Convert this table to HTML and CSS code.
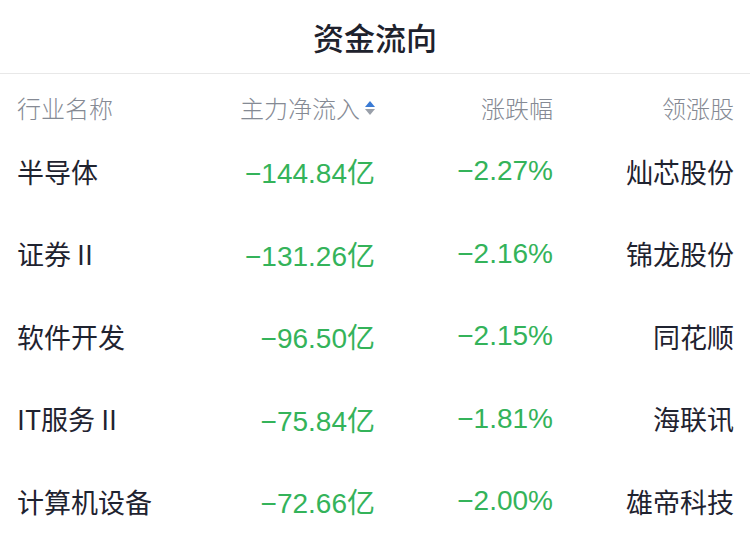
FILE: index.html
```html
<!DOCTYPE html>
<html lang="zh">
<head>
<meta charset="utf-8">
<link rel="stylesheet" href="styles.css">
</head>
<body>
<div class="panel">
  <div class="title">资金流向</div>
  <div class="table">
    <div class="row head">
      <div class="c1">行业名称</div>
      <div class="c2">主力净流入<span class="sort"><i class="up"></i><i class="down"></i></span></div>
      <div class="c3">涨跌幅</div>
      <div class="c4">领涨股</div>
    </div>
    <div class="row">
      <div class="c1">半导体</div>
      <div class="c2 num">−144.84亿</div>
      <div class="c3 num">−2.27%</div>
      <div class="c4">灿芯股份</div>
    </div>
    <div class="row">
      <div class="c1">证券 II</div>
      <div class="c2 num">−131.26亿</div>
      <div class="c3 num">−2.16%</div>
      <div class="c4">锦龙股份</div>
    </div>
    <div class="row">
      <div class="c1">软件开发</div>
      <div class="c2 num">−96.50亿</div>
      <div class="c3 num">−2.15%</div>
      <div class="c4">同花顺</div>
    </div>
    <div class="row">
      <div class="c1">IT服务 II</div>
      <div class="c2 num">−75.84亿</div>
      <div class="c3 num">−1.81%</div>
      <div class="c4">海联讯</div>
    </div>
    <div class="row">
      <div class="c1">计算机设备</div>
      <div class="c2 num">−72.66亿</div>
      <div class="c3 num">−2.00%</div>
      <div class="c4">雄帝科技</div>
    </div>
  </div>
</div>
</body>
</html>
```

FILE: styles.css
```css
html, body {
  margin: 0;
  padding: 0;
  background: #ffffff;
}
body {
  font-family: "Noto Sans CJK SC", "Noto Sans", sans-serif;
  color: #1f2330;
}
.panel {
  width: 750px;
}
.title {
  height: 73px;
  display: flex;
  align-items: center;
  justify-content: center;
  font-size: 31px;
  font-weight: 500;
  color: #1e222d;
  border-bottom: 1px solid #e8e8e8;
}
.table {
  padding: 0 16px 0 17px;
}
.row {
  display: grid;
  grid-template-columns: 200px 158px 178px 181px;
  align-items: center;
  height: 82.5px;
  font-size: 27px;
}
.row.head {
  height: 46px;
  padding-top: 10px;
  font-size: 24px;
  font-weight: 300;
  color: #858a94;
}
.c1 { text-align: left; }
.c2, .c3, .c4 { text-align: right; }
.c2 { display: flex; justify-content: flex-end; align-items: center; }
.num {
  color: #34b35a;
  font-family: "Liberation Sans", "Noto Sans CJK SC", sans-serif;
  font-size: 28px;
}
.sort {
  display: inline-flex;
  flex-direction: column;
  gap: 2px;
  margin-left: 5px;
  margin-top: 1px;
}
.sort i {
  display: block;
  width: 0;
  height: 0;
  border-left: 5px solid transparent;
  border-right: 5px solid transparent;
}
.sort .up { border-bottom: 6px solid #3a7bd5; }
.sort .down { border-top: 6px solid #9aa0aa; }
```
